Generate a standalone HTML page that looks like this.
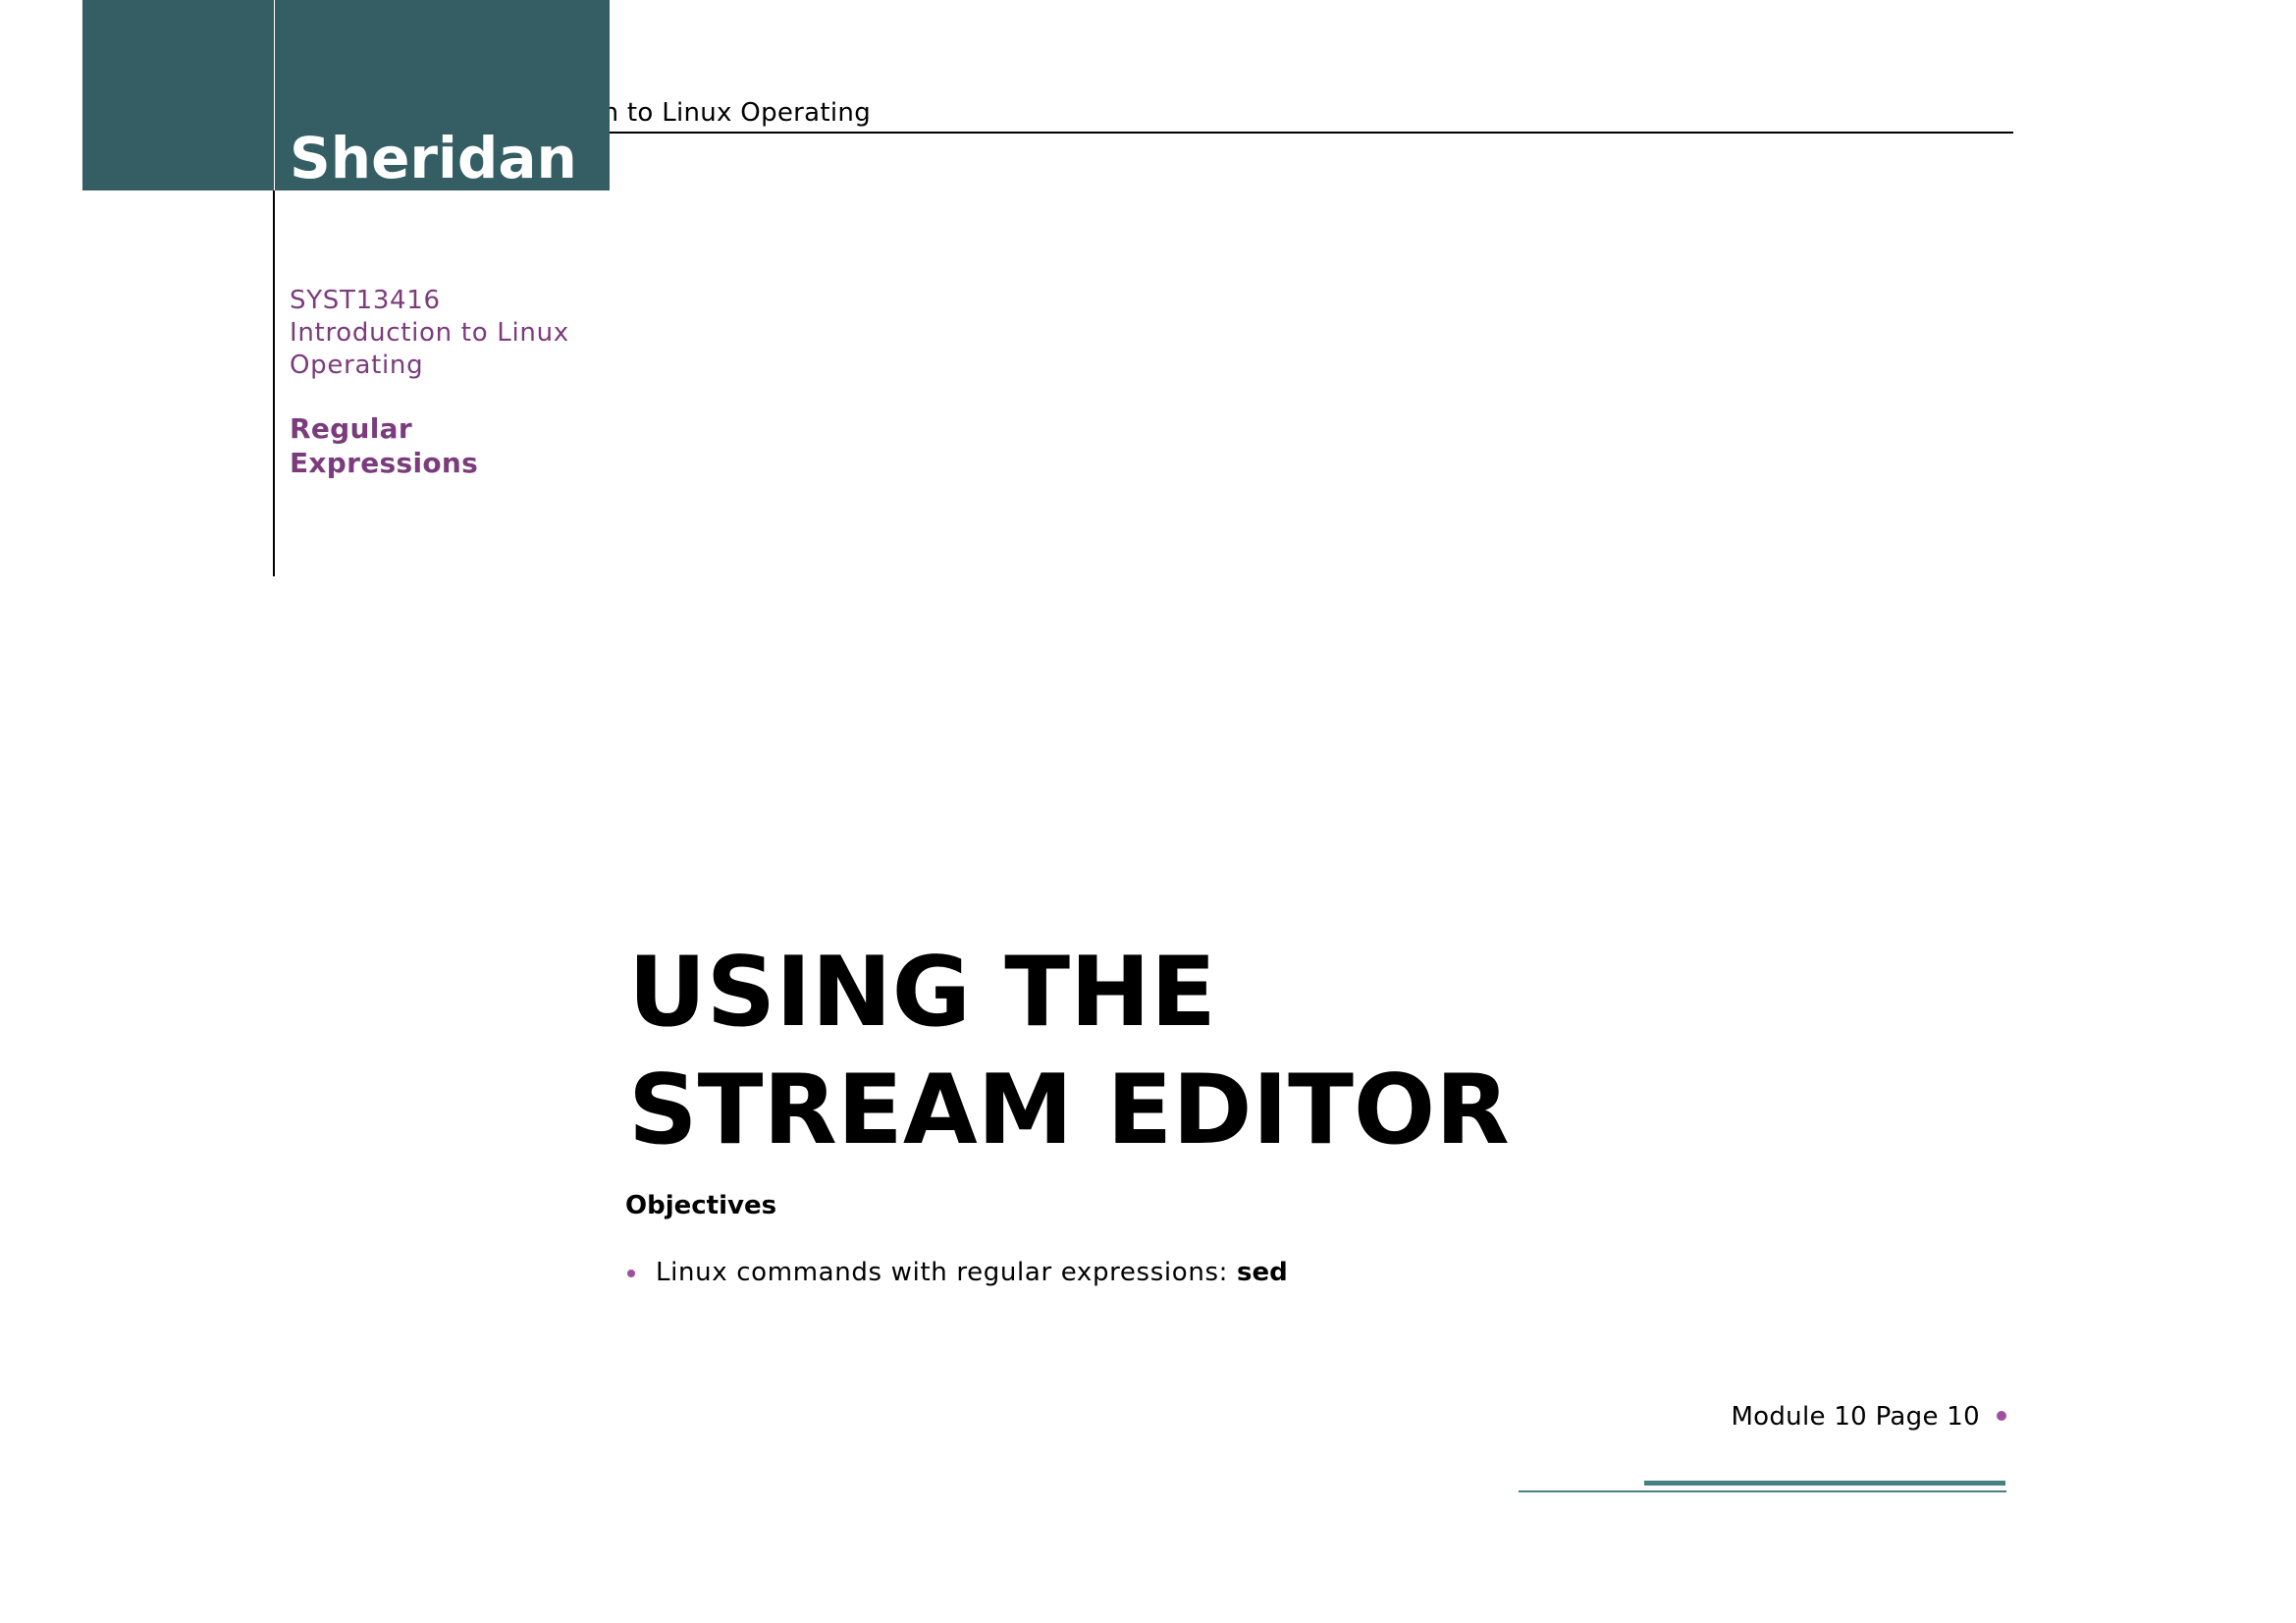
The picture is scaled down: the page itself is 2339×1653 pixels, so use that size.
<!DOCTYPE html>
<html><head><meta charset="utf-8"><style>
html,body{margin:0;padding:0;background:#fff;}
body{width:2339px;height:1653px;position:relative;overflow:hidden;font-family:"DejaVu Sans","Liberation Sans",sans-serif;}
.a{position:absolute;white-space:nowrap;line-height:1.164;}
.b{font-family:"DejaVu Sans","Liberation Sans",sans-serif;font-weight:bold;}
</style></head><body>
<div class="a" style="right:1452px;top:100px;font-size:26px;color:#000;letter-spacing:0.3px;">Introduction to Linux Operating</div>
<div style="position:absolute;left:621px;top:134px;width:1430px;height:2px;background:#000;"></div>
<div style="position:absolute;left:84px;top:0;width:537px;height:194px;background:#345e63;"></div>
<div style="position:absolute;left:279px;top:0;width:1px;height:194px;background:#fff;"></div>
<div style="position:absolute;left:278px;top:194px;width:2px;height:393px;background:#000;"></div>
<div class="a b" style="left:295px;top:128px;font-size:58px;color:#fff;">Sheridan</div>
<div class="a" style="left:295px;top:290px;font-size:26px;color:#7b3b7d;line-height:33px;letter-spacing:0.7px;">SYST13416<br>Introduction to Linux<br>Operating</div>
<div class="a b" style="left:295px;top:419px;font-size:28px;color:#7b3b7d;line-height:35px;letter-spacing:0.3px;">Regular<br>Expressions</div>
<div class="a b" style="left:640px;top:951px;font-size:98px;color:#000;line-height:120px;">USING THE<br>STREAM EDITOR</div>
<div class="a b" style="left:637px;top:1213px;font-size:26px;color:#000;">Objectives</div>
<div style="position:absolute;left:639px;top:1293px;width:8px;height:8px;border-radius:50%;background:#a050a0;"></div>
<div class="a" style="left:668px;top:1281px;font-size:26px;color:#000;letter-spacing:0.65px;">Linux commands with regular expressions: <span class="b" style="letter-spacing:0">sed</span></div>
<div class="a" style="right:322px;top:1428px;font-size:26px;color:#000;letter-spacing:0.3px;">Module 10 Page 10</div>
<div style="position:absolute;left:2034px;top:1437px;width:10px;height:10px;border-radius:50%;background:#a050a0;"></div>
<div style="position:absolute;left:1675px;top:1508px;width:368px;height:5px;background:#458083;"></div>
<div style="position:absolute;left:1547px;top:1518px;width:497px;height:2px;background:#458083;"></div>
</body></html>
